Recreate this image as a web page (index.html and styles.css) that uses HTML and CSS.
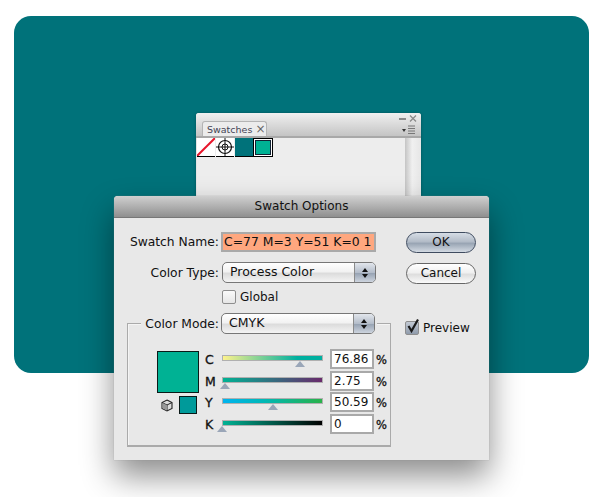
FILE: index.html
```html
<!DOCTYPE html>
<html lang="en">
<head>
<meta charset="utf-8">
<title>Swatch Options</title>
<link rel="stylesheet" href="styles.css">
</head>
<body>
<div class="artboard"></div>

<div class="panel">
  <div class="panel-top">
    <div class="tab">Swatches <span class="tab-x">×</span></div>
    <div class="panel-ctrl">
      <svg width="32" height="24" viewBox="0 0 32 24">
        <rect x="10" y="5" width="7" height="2" fill="#8a8a8a"/>
        <path d="M21 2.500l6 6M27 2.500l-6 6" stroke="#8a8a8a" stroke-width="1.300" fill="none"/>
        <path d="M13 16h4l-2 3z" fill="#333"/>
        <path d="M19 13h7M19 15.500h7M19 18h7M19 20.500h7" stroke="#777" stroke-width="1" fill="none"/>
      </svg>
    </div>
  </div>
  <div class="panel-main">
    <div class="panel-body">
      <div class="swatch-list">
        <div class="sw">
          <svg width="18" height="18" viewBox="0 0 18 18"><rect width="18" height="18" fill="#fff"/><path d="M0 18L18 0" stroke="#e8152b" stroke-width="2"/></svg>
        </div>
        <div class="sw">
          <svg width="18" height="18" viewBox="0 0 18 18"><rect width="18" height="18" fill="#fff"/><circle cx="9" cy="9" r="6.500" fill="none" stroke="#111" stroke-width="1.200"/><circle cx="9" cy="9" r="3" fill="none" stroke="#111"/><path d="M0 9h18M9 0v18" stroke="#111"/></svg>
        </div>
        <div class="sw sw-teal"></div>
        <div class="sw sw-active"><div class="sw-inner"></div></div>
      </div>
    </div>
    <div class="panel-scroll"></div>
  </div>
</div>

<div class="dialog">
  <div class="titlebar">Swatch Options</div>
  <div class="dialog-body">
    <div class="main-col">
      <div class="row row-name">
        <label class="lbl">Swatch Name:</label>
        <div class="name-field"><span class="name-sel">C=77 M=3 Y=51 K=0 1</span></div>
      </div>
      <div class="row row-type">
        <label class="lbl">Color Type:</label>
        <div class="select">Process Color<span class="stepper"><i class="up"></i><i class="down"></i></span></div>
      </div>
      <div class="row row-global">
        <span class="lbl"></span>
        <span class="check"></span><span class="check-text">Global</span>
      </div>
      <div class="group">
        <div class="group-head">
          <label class="lbl lbl-mode">Color Mode:</label>
          <div class="select">CMYK<span class="stepper"><i class="up"></i><i class="down"></i></span></div>
        </div>
        <div class="group-body">
          <div class="preview-col">
            <div class="big-swatch"></div>
            <div class="gamut-row">
              <svg width="12" height="13" viewBox="0 0 12 13"><path d="M6 1l5 2.500v6L6 12 1 9.500v-6z" fill="#ddd" stroke="#222" stroke-width="1.100"/><path d="M1 3.500L6 6l5-2.500M6 6v6" fill="none" stroke="#222"/><path d="M1.500 4L6 6.300v5.200L1.500 9.200z" fill="#999"/></svg>
              <div class="small-swatch"></div>
            </div>
          </div>
          <div class="sliders">
            <div class="sl">
              <span class="sl-name">C</span>
              <div class="track-wrap"><div class="track t-c"></div><span class="thumb" style="left:76.86%"></span></div>
              <div class="num">76.86</div><span class="pct">%</span>
            </div>
            <div class="sl">
              <span class="sl-name">M</span>
              <div class="track-wrap"><div class="track t-m"></div><span class="thumb" style="left:2.75%"></span></div>
              <div class="num">2.75</div><span class="pct">%</span>
            </div>
            <div class="sl">
              <span class="sl-name">Y</span>
              <div class="track-wrap"><div class="track t-y"></div><span class="thumb" style="left:50.59%"></span></div>
              <div class="num">50.59</div><span class="pct">%</span>
            </div>
            <div class="sl">
              <span class="sl-name">K</span>
              <div class="track-wrap"><div class="track t-k"></div><span class="thumb" style="left:0%"></span></div>
              <div class="num">0</div><span class="pct">%</span>
            </div>
          </div>
        </div>
      </div>
    </div>
    <div class="side-col">
      <div class="btn btn-ok">OK</div>
      <div class="btn">Cancel</div>
      <div class="preview-row">
        <span class="check check-on">
          <svg width="16" height="17" viewBox="0 0 16 17"><path d="M3.500 8l3 5L13 1.500" fill="none" stroke="#1a1a1a" stroke-width="2.200"/></svg>
        </span>
        <span class="check-text">Preview</span>
      </div>
    </div>
  </div>
</div>
</body>
</html>
```

FILE: styles.css
```css
html, body {
  margin: 0;
  padding: 0;
  width: 600px;
  height: 497px;
  overflow: hidden;
  background: #fff;
  font-family: "DejaVu Sans", "Liberation Sans", sans-serif;
  color: #111;
}

.artboard {
  position: absolute;
  left: 14px;
  top: 16px;
  width: 575px;
  height: 357px;
  border-radius: 17px;
  background: #00727a;
}

/* swatches panel */
.panel {
  position: absolute;
  left: 196px;
  top: 113px;
  width: 225px;
  height: 84px;
  background: #e4e4e4;
  border-radius: 3px 3px 0 0;
  box-shadow: 0 0 3px rgba(0, 0, 0, 0.3);
}
.panel-top {
  height: 23px;
  display: flex;
  justify-content: space-between;
  background: linear-gradient(#f0f0f0, #c4c4c4);
  border-radius: 3px 3px 0 0;
  border-bottom: 2px solid #a8a8a8;
  padding-left: 6px;
}
.tab {
  margin-top: 8px;
  height: 15px;
  width: 65px;
  box-sizing: border-box;
  padding-left: 4px;
  background: #ececec;
  border: 1px solid #b4b4b4;
  border-bottom: 0;
  border-radius: 3px 3px 0 0;
  font-size: 9.500px;
  line-height: 15px;
  color: #445;
  white-space: nowrap;
}
.tab-x {
  font-size: 12px;
  line-height: 12px;
  color: #666;
}
.panel-main {
  display: flex;
  height: 59px;
}
.panel-body {
  width: 208px;
  background: #ededed;
  margin-left: 1px;
}
.panel-scroll {
  flex: 1;
  background: linear-gradient(to right, #c4c4c4, #f0f0f0 45%, #e6e6e6);
}
.swatch-list {
  display: flex;
}
.sw {
  width: 18px;
  height: 18px;
  border: solid #000;
  border-width: 0 0 1px 0;
  margin-right: 1px;
  background: #fff;
}
.sw svg {
  display: block;
}
.sw-teal {
  background: #00727a;
}
.sw-active {
  background: #fff;
  border: 1px solid #000;
  margin-left: -1px;
  height: 17px;
}
.sw-inner {
  margin: 1px;
  height: 13px;
  border: 1px solid #123;
  background: #00b294;
}

/* dialog */
.dialog {
  position: absolute;
  left: 114px;
  top: 196px;
  width: 375px;
  height: 264px;
  background: #e8e8e8;
  border-radius: 4px 4px 0 0;
  box-shadow: 0 0 1px #888, 0 16px 32px rgba(0, 0, 0, 0.45);
}
.titlebar {
  height: 21px;
  background: linear-gradient(#d0d0d0, #8f8f8f);
  border-radius: 4px 4px 0 0;
  border-bottom: 1px solid #777;
  text-align: center;
  font-size: 12px;
  line-height: 20px;
}
.dialog-body {
  display: flex;
  padding: 14px 0 0 13px;
}
.main-col {
  width: 264px;
}
.side-col {
  margin-left: 15px;
}
.row {
  display: flex;
  align-items: center;
}
.lbl {
  width: 92px;
  margin-right: 2px;
  text-align: right;
  font-size: 12.300px;
  white-space: nowrap;
  flex: none;
}
.row-name {
  height: 20px;
}
.name-field {
  box-sizing: border-box;
  width: 155px;
  height: 20px;
  border: 2px solid #a9a9a9;
  background: #fff;
}
.name-sel {
  display: block;
  height: 16px;
  background: #ffa77f;
  font-size: 12.400px;
  line-height: 16px;
  white-space: nowrap;
  overflow: hidden;
  padding-left: 1px;
}
.row-type {
  margin-top: 10px;
}
.select {
  position: relative;
  box-sizing: border-box;
  width: 154px;
  height: 21px;
  margin-left: 1px;
  padding-left: 7px;
  border: 1px solid #777;
  border-radius: 5px;
  background: linear-gradient(#fff, #f2f2f2 45%, #dcdcdc 55%, #f4f4f4);
  font-size: 12.500px;
  line-height: 18px;
}
.stepper {
  position: absolute;
  right: 0;
  top: 0;
  bottom: 0;
  width: 20px;
  border-left: 1px solid #8a8a8a;
  border-radius: 0 4px 4px 0;
  background: linear-gradient(#e2e6ec, #b4bdca 50%, #98a4b4 55%, #cdd4de);
  display: flex;
  flex-direction: column;
  align-items: center;
  justify-content: center;
  gap: 2px;
}
.stepper i {
  width: 0;
  height: 0;
  border-left: 3px solid transparent;
  border-right: 3px solid transparent;
}
.stepper .up {
  border-bottom: 4px solid #111;
}
.stepper .down {
  border-top: 4px solid #111;
}
.row-global {
  margin-top: 6px;
  height: 16px;
}
.check {
  box-sizing: border-box;
  width: 14px;
  height: 14px;
  margin-left: 1px;
  flex: none;
  border: 1px solid #8e8e8e;
  border-radius: 2px;
  background: linear-gradient(#fafafa, #e6e6e6);
}
.check-on {
  position: relative;
  background: linear-gradient(#c3cad4, #8f9bab);
}
.check-on svg {
  position: absolute;
  left: -1px;
  top: -4px;
}
.check-text {
  margin-left: 4px;
  font-size: 12px;
}

/* color mode group */
.group {
  margin-top: 8px;
  position: relative;
  height: 133px;
}
.group-head {
  display: flex;
  align-items: center;
  height: 21px;
  position: relative;
  z-index: 1;
}
.group-head .lbl {
  background: #e8e8e8;
}
.lbl-mode {
  width: 78px;
  margin-left: 14px;
}
.group-head .select {
  margin-left: 0;
  box-shadow: 0 0 0 2px #e8e8e8;
}
.group-body {
  position: absolute;
  left: 0;
  top: 10px;
  width: 264px;
  height: 124px;
  box-sizing: border-box;
  border: 1px solid #aaa;
  border-bottom-width: 2px;
  display: flex;
  padding: 27px 0 0 29px;
  box-shadow: inset 1px 1px 0 #f4f4f4;
}
.preview-col {
  width: 48px;
  flex: none;
}
.big-swatch {
  box-sizing: border-box;
  width: 42px;
  height: 42px;
  border: 1px solid #0a1a18;
  background: #00b294;
}
.gamut-row {
  display: flex;
  align-items: center;
  margin-top: 3px;
  margin-left: 4px;
  gap: 6px;
}
.gamut-row svg {
  flex: none;
}
.small-swatch {
  box-sizing: border-box;
  width: 18px;
  height: 18px;
  border: 1px solid #0a1a18;
  background: #009a9a;
}
.sliders {
  margin-top: -2px;
  display: flex;
  flex-direction: column;
  gap: 1.700px;
}
.sl {
  display: flex;
  align-items: flex-start;
  height: 20px;
}
.sl-name {
  width: 17px;
  font-size: 12.500px;
  line-height: 21px;
  color: #111;
  -webkit-text-stroke: 0.3px #111;
}
.track-wrap {
  position: relative;
  width: 101px;
  height: 20px;
  margin-right: 7px;
  flex: none;
}
.track {
  margin-top: 6px;
  box-sizing: border-box;
  height: 6px;
  border: 1px solid #b0b0b0;
}
.t-c {
  background: linear-gradient(to right, #fdf28c, #00b0a0 75%);
}
.t-m {
  background: linear-gradient(to right, #00b294, #6a2a6c);
}
.t-y {
  background: linear-gradient(to right, #00b4ef, #00b8b8 40%, #2ab24a);
}
.t-k {
  background: linear-gradient(to right, #00b294, #000);
}
.thumb {
  position: absolute;
  top: 12px;
  margin-left: -5px;
  width: 0;
  height: 0;
  border-left: 5px solid transparent;
  border-right: 5px solid transparent;
  border-bottom: 6px solid #9aa6b8;
}
.num {
  box-sizing: border-box;
  width: 44px;
  height: 20px;
  border: 2px solid #a9a9a9;
  background: #fff;
  font-size: 12px;
  line-height: 16px;
  padding-left: 2px;
  flex: none;
}
.pct {
  margin-left: 2px;
  font-size: 11.500px;
  line-height: 22px;
  -webkit-text-stroke: 0.3px #111;
}

/* right column */
.btn {
  box-sizing: border-box;
  width: 70px;
  height: 21px;
  margin-bottom: 10px;
  border: 1px solid #666;
  border-radius: 11px;
  background: linear-gradient(#fff, #f0f0f0 45%, #dedede 55%, #fafafa);
  text-align: center;
  font-size: 12px;
  line-height: 19px;
}
.btn-ok {
  border-color: #3f4c60;
  background: linear-gradient(#d6dde6, #b3bcc8 45%, #99a5b4 55%, #d3dae3);
}
.preview-row {
  display: flex;
  align-items: center;
  margin-top: 37px;
  margin-left: -2px;
}
```
